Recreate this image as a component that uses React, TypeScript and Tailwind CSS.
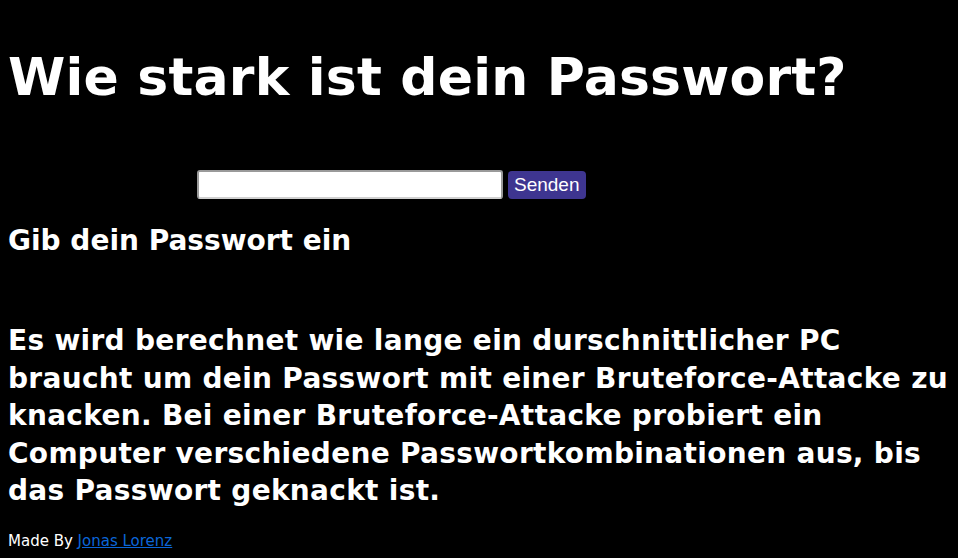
export default function App() {
  return (
    <div className="min-h-[558px] bg-black px-2 text-white font-['DejaVu_Sans','Noto_Sans',sans-serif]">
      <h1 className="pt-[46px] text-[52px] leading-[62px] font-bold tracking-[0.2px]">
        Wie stark ist dein Passwort?
      </h1>

      <form
        className="mt-[62px] flex items-end gap-[5px] pl-[189px]"
        onSubmit={(e) => e.preventDefault()}
      >
        <input
          type="password"
          className="h-[29px] w-[306px] rounded-[3px] border-2 border-[#9a9a9a] border-b-[#d0d0d0] bg-white px-1 text-black outline-none"
        />
        <button
          type="submit"
          className="h-[28px] rounded-[4px] bg-[#3e3590] px-[6px] text-[19px] leading-[28px] text-white font-['Liberation_Sans',Arial,sans-serif]"
        >
          Senden
        </button>
      </form>

      <h2 className="mt-[26px] text-[28px] leading-[32px] font-bold">
        Gib dein Passwort ein
      </h2>

      <p className="mt-[65px] text-[28px] leading-[37.5px] font-bold tracking-[0.3px]">
        Es wird berechnet wie lange ein durschnittlicher PC braucht um dein
        Passwort mit einer Bruteforce-Attacke zu knacken. Bei einer
        Bruteforce-Attacke probiert ein Computer verschiedene
        Passwortkombinationen aus, bis das Passwort geknackt ist.
      </p>

      <footer className="mt-[21px] text-[15px] leading-[20px]">
        Made By{" "}
        <a href="#" className="text-[#0b66d8] underline">
          Jonas Lorenz
        </a>
      </footer>
    </div>
  );
}
